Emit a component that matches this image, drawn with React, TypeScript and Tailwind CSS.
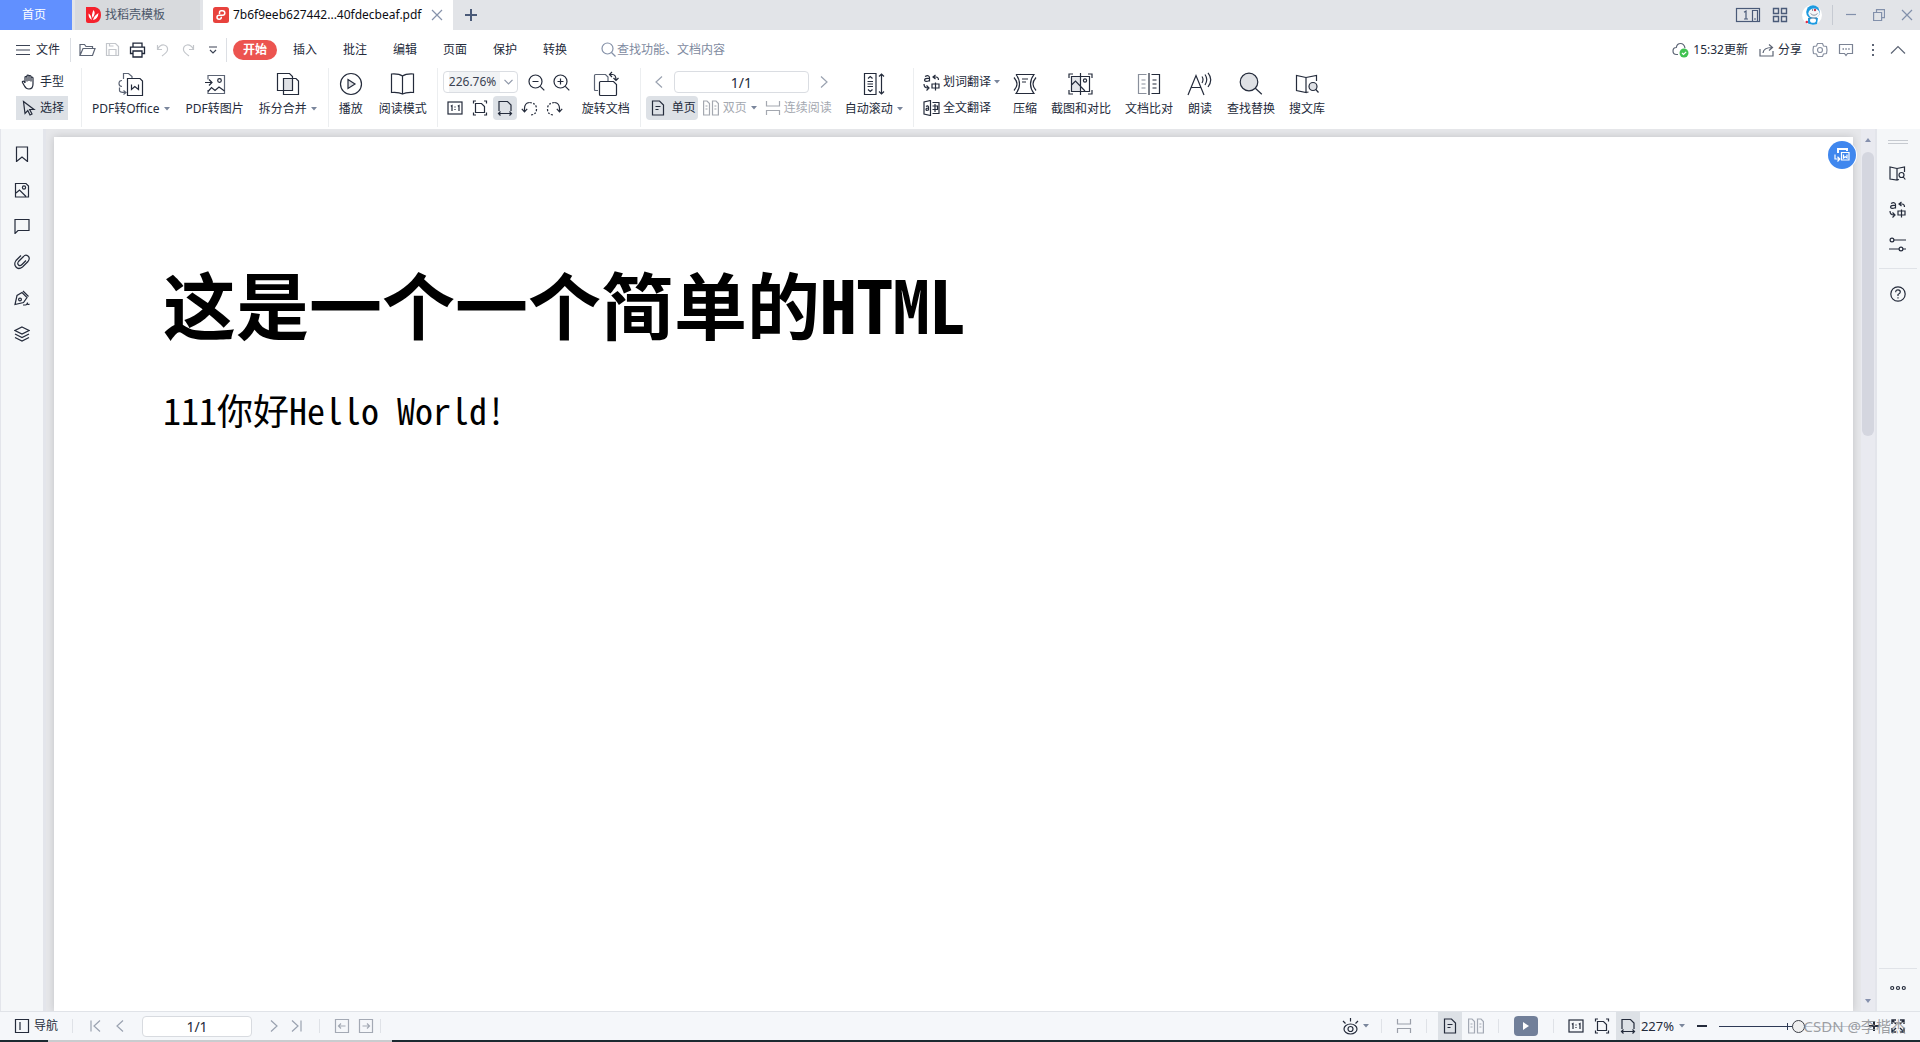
import type { ReactNode } from "react";

type IconProps = {
  w: number;
  h?: number;
  sw?: number;
  className?: string;
  children: ReactNode;
};

/** Line icon whose view box uses one unit per CSS pixel. */
function Icon({ w, h = w, sw = 1.2, className = "", children }: IconProps) {
  return (
    <svg
      width={w}
      height={h}
      viewBox={`0 0 ${w} ${h}`}
      fill="none"
      stroke="currentColor"
      strokeWidth={sw}
      className={`shrink-0 ${className}`}
      aria-hidden="true"
    >
      {children}
    </svg>
  );
}

const Caret = () => (
  <Icon w={6} h={4} className="text-[#7a869c]">
    <path d="M0 0h6L3 3.500z" fill="currentColor" stroke="none" />
  </Icon>
);

/* ---------- icons ---------- */

const ActualSize = () => (
  <Icon w={16}>
    <rect x="1" y="2" width="14" height="12" />
    <path d="M3.8 6.2L5 5.5V11M10.8 6.2L12 5.5V11M8 6.5v1M8 9v1" />
  </Icon>
);

const FitPage = () => (
  <Icon w={16}>
    <path d="M4 1H1.500v2.500M12 1h2.500v2.500M4 15H1.500v-2.500M12 15h2.500v-2.500" />
    <path d="M3.500 3.500H9.500L12.500 6.500V12.500H3.500z" />
  </Icon>
);

const FitWidth = () => (
  <Icon w={16}>
    <path d="M2 11V1.500H10.500L14 5V11M1.500 13.500h13M3.500 11.500l-2 2 2 2M12.500 11.500l2 2-2 2" />
  </Icon>
);

const SinglePage = () => (
  <Icon w={16}>
    <path d="M2.500 1H9.500L13.500 5V15H2.500zM5.500 6.500h5M5.500 9.500h3" />
  </Icon>
);

const DoublePage = () => (
  <Icon w={16}>
    <path d="M.6 1H4L6.500 3.500V15H.6zM9.500 1H13L15.400 3.500V15H9.500zM2.500 6h2M2.500 9h2M11.400 6h2M11.400 9h2" />
  </Icon>
);

const Continuous = () => (
  <Icon w={16}>
    <path d="M1.500 1v5h13V1M1.500 15v-4.500h13V15" />
  </Icon>
);

const ChevronLeft = () => (
  <Icon w={12} h={14}>
    <path d="M9 1.500L3 7l6 5.500" />
  </Icon>
);
const ChevronRight = () => (
  <Icon w={12} h={14}>
    <path d="M3 1.500L9 7l-6 5.500" />
  </Icon>
);

const TranslateWord = () => (
  <Icon w={17} h={17} sw={1.2}>
    <path d="M2 2.500Q6 .5 6.500 3.500V7.500M6.500 4.500Q1.500 4 1.500 6.200 2 8.500 6.500 6.500" />
    <path d="M12.500 1l-2.500 2 2.500 2M10 3h3Q15.500 3 15.500 6M1 10Q1 14 5 14M3.500 11.500l2.500 2.500-2.500 2.500" />
    <path d="M9 10h7v4H9zM12.500 8.500v8" />
  </Icon>
);

const BookSearchSmall = () => (
  <Icon w={17} h={15}>
    <path d="M8 2.500L1 1V13L8 14zM8 2.500L15.500 1V6M8 14l2-.5" />
    <circle cx="12.500" cy="9" r="2.500" />
    <path d="M14.300 11l2 2.500" />
  </Icon>
);

/* ---------- title bar ---------- */

function TitleBar() {
  return (
    <header className="flex h-[30px] shrink-0 items-stretch bg-[#e2e4e8]">
      <button className="w-[72px] bg-[#6190ff] pr-1 text-white">首页</button>
      <button className="ml-[3px] flex w-[125px] items-center gap-1 bg-[#d8dadd] pl-[11px] text-[#4b5669]">
        <svg width="15" height="16" viewBox="0 0 15 16" aria-hidden="true">
          <path d="M0 0H9Q15 1 15 8T8 16H2Q0 16 0 14z" fill="#f5222d" />
          <path d="M7.500 3Q9.500 5.500 8 8.500L6.700 11Q5 8 7.500 3zM2.500 6.500Q5.500 8 5.700 13 2.500 11 2.500 6.500zM12.500 6Q8 8.500 7 13 12 12 12.500 6z" fill="#fff" />
        </svg>
        找稻壳模板
      </button>
      <div className="ml-[3px] flex w-[250px] items-center bg-white pl-[10px] text-[#0c0e14]">
        <svg width="16" height="16" viewBox="0 0 16 16" aria-hidden="true">
          <rect width="16" height="16" rx="2.500" fill="#e8423d" />
          <path
            d="M6.500 7V5.500Q6.500 3.700 8.200 3.700H9.500Q11.800 3.700 11.800 6T9.500 8.300H6.200Q4 8.300 4 10.300T6.200 12.300Q8.300 12.300 8.300 10.300V9.800"
            fill="none"
            stroke="#fff"
            strokeWidth="1.500"
          />
        </svg>
        <span className="ml-1 flex-1 whitespace-nowrap">7b6f9eeb627442...40fdecbeaf.pdf</span>
        <button aria-label="关闭标签" className="mr-[10px] text-[#8793ab]">
          <Icon w={12}>
            <path d="M1 1l10 10M11 1L1 11" />
          </Icon>
        </button>
      </div>
      <button aria-label="新建标签" className="ml-3 text-[#4a5a78]">
        <Icon w={12} sw={2}>
          <path d="M6 0v12M0 6h12" />
        </Icon>
      </button>
      <div className="ml-auto flex items-center text-[#4a5a78]">
        <button aria-label="窗口布局" className="mr-[11px]">
          <Icon w={26} h={16}>
            <rect x="1.500" y="1.500" width="23" height="13" />
            <path d="M9 5.200L11 4v8M9 12h4M17.500 14.500V3.500h5V14.500M19 12h2" />
          </Icon>
        </button>
        <button aria-label="应用" className="mr-[14px]">
          <Icon w={16} sw={1.4}>
            <path d="M1.500 1.500h5v5h-5zM9.500 1.500h5v5h-5zM1.500 9.500h5v5h-5zM9.500 9.500h5v5h-5z" />
          </Icon>
        </button>
        <button aria-label="用户" className="mr-[10px]">
          <svg width="20" height="20" viewBox="0 0 20 20" aria-hidden="true">
            <circle cx="10" cy="10" r="10" fill="#fff" />
            <circle cx="11" cy="7" r="6.800" fill="#1d9ae0" />
            <ellipse cx="12" cy="8.200" rx="5.600" ry="4.600" fill="#f4f6f8" />
            <path d="M6 13h10l-1 6Q10 20.500 6 18.500z" fill="#1d9ae0" />
            <ellipse cx="11" cy="15.500" rx="3" ry="2.300" fill="#fff" />
            <circle cx="13" cy="5" r="1.200" fill="#c8384a" />
            <path d="M8.500 8.500Q12 12 15.500 8.500M10.500 4v2M6.500 13H15" stroke="#5b6b80" strokeWidth=".7" fill="none" />
            <circle cx="4.800" cy="17" r="1.300" fill="#e0304a" />
          </svg>
        </button>
        <span className="h-5 w-px bg-[#c6cad2]" />
        <div className="flex items-center gap-4 pr-[7px] pl-3 text-[#8290ab]">
          <button aria-label="最小化">
            <Icon w={12}>
              <path d="M1 5.500h10" />
            </Icon>
          </button>
          <button aria-label="还原">
            <Icon w={12}>
              <path d="M.6 3.500h8v8h-8zM3.500 3.500V.6h8v8h-3" />
            </Icon>
          </button>
          <button aria-label="关闭">
            <Icon w={12}>
              <path d="M1 1l10 10M11 1L1 11" />
            </Icon>
          </button>
        </div>
      </div>
    </header>
  );
}

/* ---------- menu row ---------- */

const MENUS = ["插入", "批注", "编辑", "页面", "保护", "转换"];

function MenuBar() {
  return (
    <nav className="flex h-[38px] shrink-0 items-center bg-white pt-px pl-4">
      <button className="flex items-center gap-[5px]">
        <Icon w={15} h={12} className="text-[#3c4354]">
          <path d="M0 1.500h14M0 6h14M0 10.500h14" />
        </Icon>
        文件
      </button>
      <span className="ml-[10px] h-6 w-px bg-[#dcdfe4]" />
      <div className="ml-2 flex items-center gap-[9px] text-[#c3c6cb]">
        <button aria-label="打开" className="text-[#5d6575]">
          <Icon w={17} h={14}>
            <path d="M1 12.500V1.500h4.500L7 3.500h6.500V5.500M1 12.500L4 5.500h12L13.500 12.500z" />
          </Icon>
        </button>
        <button aria-label="保存">
          <Icon w={15}>
            <path d="M1.500 1.500H10.500L13.500 4.500V13.500H1.500zM4 13V7.500h7V13M4.500 1.500v2.500h4" />
          </Icon>
        </button>
        <button aria-label="打印" className="text-[#1f2738]">
          <Icon w={17} h={16} sw={1.3}>
            <path d="M4 5V1.200h9V5M4 11.500H1.500V5.200h14V11.500H13M4 9h9v6H4z" />
          </Icon>
        </button>
        <button aria-label="撤销">
          <Icon w={16} h={14}>
            <path d="M2.500 2v4.500H7M2.500 6.500Q5 1.500 9 2 13 3 12.500 7 12 9.500 7 13" />
          </Icon>
        </button>
        <button aria-label="恢复">
          <Icon w={16} h={14}>
            <path d="M13.500 2v4.500H9M13.500 6.500Q11 1.500 7 2 3 3 3.500 7 4 9.500 9 13" />
          </Icon>
        </button>
        <button aria-label="自定义快速访问" className="ml-[3px] text-[#3c4354]">
          <Icon w={10}>
            <path d="M1 2h8M2 5l3 3 3-3" />
          </Icon>
        </button>
      </div>
      <span className="ml-2 h-6 w-px bg-[#dcdfe4]" />
      <button className="ml-[6px] h-5 w-11 rounded-full bg-[#ec5450] font-bold text-white">开始</button>
      <div className="ml-4 flex gap-[26px]">
        {MENUS.map((m) => (
          <button key={m}>{m}</button>
        ))}
      </div>
      <label className="ml-[34px] flex items-center gap-px text-[#8591a8]">
        <Icon w={15}>
          <circle cx="6.500" cy="6.500" r="5.500" />
          <path d="M10.500 10.500l4 4" />
        </Icon>
        <input
          type="text"
          aria-label="搜索"
          placeholder="查找功能、文档内容"
          className="w-[160px] bg-transparent outline-none placeholder:text-[#7e8aa0]"
        />
      </label>
      <div className="ml-auto flex items-center pr-[14px] text-[#5d6575]">
        <button className="flex items-center gap-1">
          <svg width="17" height="16" viewBox="0 0 17 16" fill="none" aria-hidden="true">
            <path d="M6 12.500H4.500Q1 12.500 1 9T4.300 5.500Q5 1.500 8.500 1.500T13 6" stroke="#5d6575" strokeWidth="1.200" />
            <circle cx="12" cy="11" r="4.500" fill="#41c251" />
            <path d="M10 11l1.500 1.500L14.200 9.800" stroke="#fff" strokeWidth="1.200" />
          </svg>
          <span className="text-[#242b3b]">15:32更新</span>
        </button>
        <button className="ml-[11px] flex items-center gap-1">
          <Icon w={15} h={14}>
            <path d="M1 6v7h13V8M4 10Q4.500 4.500 13 4.500M10 1.500l3.500 3-3.500 3" />
          </Icon>
          <span className="text-[#242b3b]">分享</span>
        </button>
        <button aria-label="设置" className="ml-[10px] text-[#8a92a2]">
          <Icon w={16}>
            <path d="M5.500 1.500h5L11.500 4l3 .5L15 8l-.5 3.500-3 .5-1 2.500h-5L4.500 12l-3-.5L1 8l.5-3.500 3-.5z" />
            <circle cx="8" cy="8" r="2.500" />
          </Icon>
        </button>
        <button aria-label="反馈" className="ml-[10px] text-[#7b8394]">
          <Icon w={16} h={14}>
            <path d="M1.500 1.500h13v9H9.500L8 12.500 6.500 10.500h-5z" />
            <path d="M4.500 6h1.500M7.300 6h1.500M10.200 6h1.500" strokeWidth="1.600" />
          </Icon>
        </button>
        <button aria-label="更多" className="ml-[14px]">
          <Icon w={10} h={14}>
            <path d="M4 1h2v2H4zM4 6h2v2H4zM4 11h2v2H4z" fill="currentColor" stroke="none" />
          </Icon>
        </button>
        <button aria-label="收起功能区" className="ml-3">
          <Icon w={16} h={10}>
            <path d="M1 8.500L8 1.500l7 7" />
          </Icon>
        </button>
      </div>
    </nav>
  );
}

/* ---------- ribbon ---------- */

function Tool({ label, caret, children }: { label: string; caret?: boolean; children: ReactNode }) {
  return (
    <button className="flex shrink-0 flex-col items-center gap-1 pt-[3px]">
      <span className="flex h-[26px] items-center">{children}</span>
      <span className="flex items-center gap-1 leading-4 whitespace-nowrap">
        {label}
        {caret && <Caret />}
      </span>
    </button>
  );
}

const Rule = () => <span className="h-[59px] w-px shrink-0 bg-[#eceef0]" />;

const iconBtn = "flex h-6 w-6 items-center justify-center";
const iconBtnOn = "flex h-6 w-6 items-center justify-center rounded-sm bg-[#dde1e6]";

function Ribbon() {
  return (
    <section className="flex h-[61px] shrink-0 items-start bg-white pl-4">
      <div className="mr-[13px] flex flex-col gap-[2px] pt-[2px]">
        <button className="flex h-6 w-[52px] items-center gap-1 pl-[5px]">
          <Icon w={15} h={16}>
            <path d="M4 9V3.500Q4 2.500 5 2.500T6 3.500V7.500M6 3V2Q6 1 7 1T8 2V7M8 2.500Q8 1.500 9 1.500T10 2.500V7.500M10 4Q10 3 11 3T12 4V10Q12 15 8 15 5 15 3.500 12L1.500 8.500Q1 7.500 2 7.200T4 9" />
          </Icon>
          手型
        </button>
        <button className="flex h-6 w-[52px] items-center gap-1 bg-[#dde1e6] pl-[5px]">
          <Icon w={15} h={16}>
            <path d="M2.500 1.500L13 9.500H8.700L11 14 9 15 6.800 10.500 4 13.500z" />
          </Icon>
          选择
        </button>
      </div>
      <Rule />
      <div className="mr-[11px] ml-[10px] flex">
        <Tool label="PDF转Office" caret>
          <Icon w={26} h={26}>
            <path d="M5.500 8V2.500H10.500L14 5.500V7M4 9.500Q1 9.500 1 12.500T4 15.500M1.500 16.500V19.500Q1.500 21.500 7 21.500M5.500 19.500l2.500 2-2.500 2" stroke="#5d6575" />
            <path d="M9.500 7.500H22L24.500 10V24.500H9.500z" />
            <path d="M13.500 13.500V18.500L16.800 15.500 20.500 18.500V13.500" />
          </Icon>
        </Tool>
        <span className="w-4" />
        <Tool label="PDF转图片">
          <Icon w={22} h={22}>
            <path d="M4 6.500V2.500H20.500V20.500H4V17" stroke="#5d6575" />
            <path d="M1 9.500H7.500M5 6.500l3 3-3 3" />
            <circle cx="15.500" cy="7.500" r="1.800" />
            <path d="M4 18.500L7.500 14.500 11 17.500 15 14 20.500 18" />
          </Icon>
        </Tool>
        <span className="w-[15px]" />
        <Tool label="拆分合并" caret>
          <Icon w={24} h={24}>
            <path d="M7.500 6.500H16.500V18.500H7.500z" fill="#dfe1e5" stroke="none" />
            <path d="M7 18.500H1.500V1.500H13.500L16.500 4.500V18.500H7" />
            <path d="M7.500 6.500H20L22.500 9V22.500H7.500z" />
          </Icon>
        </Tool>
      </div>
      <Rule />
      <div className="mx-[10px] flex gap-4">
        <Tool label="播放">
          <Icon w={24}>
            <circle cx="12" cy="12" r="10.500" />
            <path d="M9 7.500L16 12 9 16.500z" fill="#dfe1e5" />
          </Icon>
        </Tool>
        <Tool label="阅读模式">
          <Icon w={25} h={24}>
            <path d="M12.500 4Q9 1.500 1.500 2V20.500Q9 20 12.500 22 16 20 23.500 20.500V2Q16 1.500 12.500 4zV22" />
          </Icon>
        </Tool>
      </div>
      <Rule />
      <div className="ml-[5px] flex flex-col gap-[3px] pt-[3px]">
        <div className="flex items-center">
          <label className="relative flex h-[22px] w-[75px] items-center rounded-sm border border-[#dadde2]">
            <select
              aria-label="缩放比例"
              className="ml-[5px] h-full w-[51px] appearance-none overflow-visible bg-[#f1f3f5] text-[#3a4252] outline-none"
            >
              <option>226.76%</option>
            </select>
            <span className="pointer-events-none absolute right-1 text-[#8e97a8]">
              <Icon w={9} h={6}>
                <path d="M.5 .8l4 4 4-4" />
              </Icon>
            </span>
          </label>
          <button aria-label="缩小" className="ml-[10px]">
            <Icon w={17}>
              <circle cx="7.500" cy="7.500" r="6.500" />
              <path d="M4.500 7.500h6M12.300 12.300l4 4" />
            </Icon>
          </button>
          <button aria-label="放大" className="ml-2">
            <Icon w={17}>
              <circle cx="7.500" cy="7.500" r="6.500" />
              <path d="M4.500 7.500h6M7.500 4.500v6M12.300 12.300l4 4" />
            </Icon>
          </button>
        </div>
        <div className="flex gap-[1px]">
          <button aria-label="实际大小" className={iconBtn}>
            <ActualSize />
          </button>
          <button aria-label="适合页面" className={iconBtn}>
            <FitPage />
          </button>
          <button aria-label="适合宽度" className={iconBtnOn}>
            <FitWidth />
          </button>
          <button aria-label="向左旋转" className={iconBtn}>
            <Icon w={17} h={15}>
              <path d="M3.500 10.500V7.500Q3.500 2 8.500 1.500M.8 7.800l2.700 3 2.700-3" />
              <path d="M8.500 1.500Q15.500 2 15.500 8T9 14" strokeDasharray="2 1.500" />
            </Icon>
          </button>
          <button aria-label="向右旋转" className={iconBtn}>
            <Icon w={17} h={15}>
              <path d="M13.500 10.500V7.500Q13.500 2 8.500 1.500M16.200 7.800l-2.700 3-2.700-3" />
              <path d="M8.500 1.500Q1.500 2 1.500 8T8 14" strokeDasharray="2 1.500" />
            </Icon>
          </button>
        </div>
      </div>
      <div className="mr-[10px] ml-3">
        <Tool label="旋转文档">
          <Icon w={26} h={26}>
            <path d="M5 19.500H2.500Q1.500 19.500 1.500 18.500V4.500Q1.500 3.500 2.500 3.500H12.500L15 6V10" stroke="#5d6575" />
            <path d="M6.500 11.500Q6.500 10.500 7.500 10.500H20.500L23.500 13.500V23.500Q23.500 24.500 22.500 24.500H7.500Q6.500 24.500 6.500 23.500z" />
            <path d="M19 1l-2.500 2.500 2.500 2.500M16.500 3.500h3Q23 3.500 23 9M20.500 7l2.500 2.500 2.500-2.500" />
          </Icon>
        </Tool>
      </div>
      <Rule />
      <div className="ml-[5px] flex flex-col gap-[3px] pt-[3px]">
        <div className="flex h-[22px] items-center justify-between pr-[2px] pl-[7px] text-[#9aa2b0]">
          <button aria-label="上一页">
            <ChevronLeft />
          </button>
          <input
            aria-label="页码"
            defaultValue="1/1"
            className="h-[22px] w-[135px] rounded-sm border border-[#dadde2] text-center text-[14px] text-[#242b3b] outline-none"
          />
          <button aria-label="下一页">
            <ChevronRight />
          </button>
        </div>
        <div className="flex items-center text-[#a4a8b0]">
          <button className="flex h-6 w-[52px] items-center gap-[6px] rounded-sm bg-[#dde1e6] pl-1 text-[#242b3b]">
            <SinglePage />
            单页
          </button>
          <button className="ml-[5px] flex items-center gap-1">
            <DoublePage />
            双页
            <Caret />
          </button>
          <button className="ml-2 flex items-center gap-[3px]">
            <Continuous />
            连续阅读
          </button>
        </div>
      </div>
      <div className="mr-[10px] ml-[13px]">
        <Tool label="自动滚动" caret>
          <Icon w={22} h={24}>
            <path d="M1.500 1.500H13V22.500H1.500zM4.500 9.500h5.500M4.500 12h5.500M4.500 14.500h5.500M5 6.500l2.250-2 2.250 2M5 17.500l2.250 2 2.250-2" />
            <path d="M18.500 2v20M16 4.500l2.500-2.500 2.500 2.500M16 19.500l2.500 2.500 2.500-2.500" />
          </Icon>
        </Tool>
      </div>
      <Rule />
      <div className="mr-[13px] ml-[9px] flex flex-col gap-[2px] pt-[2px]">
        <button className="flex h-6 items-center gap-[3px]">
          <TranslateWord />
          划词翻译
          <Caret />
        </button>
        <button className="flex h-6 items-center gap-[3px]">
          <Icon w={17} h={16}>
            <path d="M7.500 .5L1 2v12l6.500 1.500zM9.500 2.500h6.500v11h-6.500M9.500 6h5v3.500h-5M12 4v8M3 6.500Q5 5 5.500 7v3.500M5.500 8Q3 8 3 9.500T5.500 10" />
          </Icon>
          全文翻译
        </button>
      </div>
      <div className="flex gap-[14px]">
        <Tool label="压缩">
          <Icon w={24} h={24}>
            <path d="M3 2.500H21Q17.500 7 17.500 12T21 21.500H3Q6.500 17 6.500 12T3 2.500M9 7h6M9 10h4" />
            <path d="M1 5.500Q4 9 4 12T1 18.500M23 5.500Q20 9 20 12T23 18.500" />
          </Icon>
        </Tool>
        <Tool label="截图和对比">
          <Icon w={25} h={24}>
            <path d="M3.500 4.500H12.500V19.500H3.500z" fill="#e4e6ea" stroke="none" />
            <path d="M1 6V2H5M20 2h4V6M1 18v4H5M20 22h4V18" />
            <path d="M3.500 4.500H21.500V19.500H3.500zM12.500 1v22M3.500 13L7.500 9 17 19" />
            <circle cx="17" cy="8.500" r="1.600" />
          </Icon>
        </Tool>
        <Tool label="文档比对">
          <Icon w={24} h={24}>
            <path d="M9.500 2.500H1.500V21.500H9.500M4.500 8h4M4.500 12h4M4.500 16h4" stroke="#8a909c" />
            <path d="M12 1v22M14.500 2.500H22.500V21.500H14.500M15.500 8h4M15.500 12h4M15.500 16h4" />
          </Icon>
        </Tool>
        <Tool label="朗读">
          <Icon w={26} h={24}>
            <path d="M1 23L9 3.500 17 23M4 15.500h10" />
            <path d="M15 4.500Q17 7.500 15 11M18 2.500Q21.500 7.500 18 13M21 .8Q26.500 7.500 21 15" />
          </Icon>
        </Tool>
        <Tool label="查找替换">
          <Icon w={24}>
            <circle cx="10" cy="10" r="8.800" fill="#dfe1e5" />
            <path d="M16.300 16.300l6.500 6" />
          </Icon>
        </Tool>
        <Tool label="搜文库">
          <Icon w={24} h={22}>
            <path d="M11 4.500L1.500 2.500V17.500L11 19.500zM11 4.500L21.500 2.500V8M11 19.500l2.500-.5" />
            <circle cx="18" cy="13.500" r="4" fill="#dfe1e5" />
            <path d="M20.800 16.500l2.700 3" />
          </Icon>
        </Tool>
      </div>
    </section>
  );
}

/* ---------- workspace ---------- */

function LeftRail() {
  return (
    <aside className="flex w-[46px] shrink-0 flex-col items-center gap-5 border-r-[3px] border-l border-[#e3e5eb] bg-[#f5f7f9] pt-[17px]">
      <button aria-label="书签">
        <Icon w={16}>
          <path d="M2.500 1H13.500V15.500L8 11 2.500 15.500z" />
        </Icon>
      </button>
      <button aria-label="缩略图">
        <Icon w={16}>
          <path d="M1.500 1.500H12L14.500 4V15H1.500zM2 11L5.500 8 12 14.500" />
          <circle cx="10" cy="5.500" r="1.600" />
        </Icon>
      </button>
      <button aria-label="批注">
        <Icon w={16}>
          <path d="M1 1.500H15V12.500H4L1 15.500z" />
        </Icon>
      </button>
      <button aria-label="附件">
        <Icon w={16}>
          <path d="M7 1.500L2 6.500Q-.5 10 2 13T8.500 13L14 7.500Q16.500 4 14 2T9.500 2.500L4.500 7.500Q3 9.500 4.500 11T8 10.500L12 6.500" />
        </Icon>
      </button>
      <button aria-label="签名">
        <Icon w={16}>
          <path d="M9 1l5.500 5.500M8 2.500L3 5.500 1 14.500 9.500 12.500 13 7.500zM9 15h2.500Q13 15 13.500 12.500 13 15.500 15.500 14" />
          <circle cx="6" cy="9.500" r="1.400" />
        </Icon>
      </button>
      <button aria-label="图层">
        <Icon w={16}>
          <path d="M8 1L15 4.500 8 8 1 4.500zM1 8l7 3.500L15 8M1 11.500L8 15l7-3.500" />
        </Icon>
      </button>
    </aside>
  );
}

function RightRail() {
  return (
    <aside className="flex w-[45px] shrink-0 flex-col items-center border-l-2 border-[#e3e5eb] bg-[#f5f7f9] pt-[11px] pr-[2px]">
      <span className="h-1 w-5 border-y border-[#c6cad0]" />
      <button aria-label="搜文库" className="mt-[22px]">
        <BookSearchSmall />
      </button>
      <button aria-label="划词翻译" className="mt-5">
        <TranslateWord />
      </button>
      <button aria-label="设置" className="mt-[19px]">
        <Icon w={17} h={15}>
          <circle cx="3" cy="3" r="1.900" />
          <circle cx="12" cy="12" r="1.900" />
          <path d="M5 3h12M0 12h10M14 12h3" />
        </Icon>
      </button>
      <span className="mt-4 h-px w-[38px] bg-[#e0e3e8]" />
      <button aria-label="帮助" className="mt-[17px]">
        <Icon w={16}>
          <circle cx="8" cy="8" r="7.200" />
          <path d="M5.700 6.200Q5.700 3.800 8 3.800T10.300 6Q10.300 7.200 8 8.500V10M8 11.200v1.300" />
        </Icon>
      </button>
      <div className="mt-auto flex h-[43px] w-[38px] justify-center border-t border-[#e0e3e8] pb-1">
        <button aria-label="更多工具">
          <Icon w={16} h={16}>
            <circle cx="2.200" cy="8" r="1.500" />
            <circle cx="8" cy="8" r="1.500" />
            <circle cx="13.800" cy="8" r="1.500" />
          </Icon>
        </button>
      </div>
    </aside>
  );
}

function Workspace() {
  return (
    <main className="flex min-h-0 flex-1">
      <LeftRail />
      <div className="relative flex min-w-0 flex-1 overflow-hidden bg-[#e6e7ea] px-2 pt-2">
        <article className="flex-1 bg-white pt-[129px] pl-[109px] text-black shadow-[0_0_8px_rgba(0,0,0,0.16)] font-['Noto_Sans_Mono_CJK_SC','Noto_Sans_CJK_SC',monospace]">
          <h1 className="text-[73px] leading-[72px] font-bold">这是一个一个简单的HTML</h1>
          <p className="mt-[49px] text-[36px] leading-[44px]">111你好Hello World!</p>
        </article>
        <button
          aria-label="转换为Word"
          className="absolute top-3 right-[5px] flex h-7 w-7 items-center justify-center rounded-full bg-[#4087ee] text-white shadow-[0_0_0_1px_#fff]"
        >
          <Icon w={16}>
            <path d="M4 6V2H13V4" strokeWidth="2" />
            <path d="M7.500 5.500H15V13H7.500zM9.500 7.500v3.500L11.200 9.800 13 11V7.500" />
            <path d="M1 7.500V12H5M3.500 9.800L5.800 12 3.500 14.500" />
          </Icon>
        </button>
      </div>
      <div className="flex w-[14px] shrink-0 flex-col items-center bg-[#e9eaf0] pt-[9px] pb-2 text-[#8590ad]">
        <Icon w={6} h={4}>
          <path d="M0 4L3 0l3 4z" fill="currentColor" stroke="none" />
        </Icon>
        <span className="mt-[10px] h-[284px] w-3 rounded-full bg-[#d4d6df]" />
        <Icon w={6} h={4} className="mt-auto">
          <path d="M0 0L3 4l3-4z" fill="currentColor" stroke="none" />
        </Icon>
      </div>
      <RightRail />
    </main>
  );
}

/* ---------- status bar ---------- */

const Sep = () => <span className="h-[14px] w-px shrink-0 bg-[#dfe2e7]" />;

function StatusBar() {
  return (
    <footer className="shrink-0">
      <div className="flex h-[29px] items-center border-t border-[#e0e3e8] bg-[#f5f7fa] pl-[14px]">
        <button className="flex items-center gap-1">
          <Icon w={16}>
            <path d="M1.500 1.500h13v13h-13zM6 4v8" />
          </Icon>
          导航
        </button>
        <span className="ml-[14px]" />
        <Sep />
        <div className="ml-4 flex items-center text-[#9aa2b0]">
          <button aria-label="第一页">
            <Icon w={13} h={14}>
              <path d="M2 1.500v11M11 1.500L5 7l6 5.500" />
            </Icon>
          </button>
          <button aria-label="上一页" className="ml-3">
            <ChevronLeft />
          </button>
          <input
            aria-label="当前页"
            defaultValue="1/1"
            className="ml-4 h-[21px] w-[110px] rounded-sm border border-[#d8dbe0] bg-white text-center text-[14px] text-[#242b3b] outline-none"
          />
          <button aria-label="下一页" className="ml-4">
            <ChevronRight />
          </button>
          <button aria-label="最后一页" className="ml-[10px]">
            <Icon w={13} h={14}>
              <path d="M11 1.500v11M2 1.500L8 7l-6 5.500" />
            </Icon>
          </button>
        </div>
        <span className="ml-4" />
        <Sep />
        <div className="mr-[6px] ml-[14px] flex gap-2 text-[#a3a9b4]">
          <button aria-label="后退视图">
            <Icon w={16}>
              <path d="M1.500 1.500h13v13h-13zM4.500 8h7M7 5.500L4.500 8 7 10.500" />
            </Icon>
          </button>
          <button aria-label="前进视图">
            <Icon w={16}>
              <path d="M1.500 1.500h13v13h-13zM4.500 8h7M9 5.500L11.500 8 9 10.500" />
            </Icon>
          </button>
        </div>
        <Sep />
        <div className="relative ml-auto flex items-center pr-[15px]">
          <button aria-label="护眼模式" className="flex items-center gap-1">
            <Icon w={17} h={17}>
              <circle cx="8.500" cy="11" r="2.500" />
              <ellipse cx="8.500" cy="11" rx="6.500" ry="5" />
              <path d="M8.500 0v3.500M1 3l2.500 2.500M16 3l-2.500 2.500" />
            </Icon>
            <Caret />
          </button>
          <span className="ml-3" />
          <Sep />
          <button aria-label="连续阅读" className="mx-[14px] text-[#9a9fa9]">
            <Continuous />
          </button>
          <Sep />
          <button aria-label="单页" className="ml-[11px] flex h-7 w-6 items-center justify-center bg-[#dde1e6]">
            <SinglePage />
          </button>
          <button aria-label="双页" className="mr-[14px] ml-[6px] text-[#a3a9b4]">
            <DoublePage />
          </button>
          <Sep />
          <button aria-label="播放" className="mx-[15px] flex h-5 w-6 items-center justify-center rounded-sm bg-[#717f99] text-white">
            <Icon w={8} h={10}>
              <path d="M1 1l6 4-6 4z" fill="currentColor" stroke="none" />
            </Icon>
          </button>
          <Sep />
          <button aria-label="实际大小" className="ml-[14px]">
            <ActualSize />
          </button>
          <button aria-label="适合页面" className="ml-[10px]">
            <FitPage />
          </button>
          <button aria-label="适合宽度" className="ml-[6px] flex h-7 w-6 items-center justify-center bg-[#dde1e6]">
            <FitWidth />
          </button>
          <button className="ml-px flex items-center gap-[5px] text-[13px]">
            227% <Caret />
          </button>
          <button aria-label="缩小" className="ml-3">
            <Icon w={10} h={10} sw={2}>
              <path d="M0 5h10" />
            </Icon>
          </button>
          <div className="relative ml-3 flex h-5 w-[150px] items-center">
            <span className="absolute left-[68px] h-[7px] w-px bg-[#2e3a55]" />
            <input
              type="range"
              aria-label="缩放"
              min={0}
              max={100}
              defaultValue={53}
              className="h-[13px] w-full appearance-none bg-[linear-gradient(90deg,#2e3a55_0_53%,#c3c8d2_53%_100%)] bg-[length:100%_1px] bg-center bg-no-repeat [&::-webkit-slider-thumb]:h-[13px] [&::-webkit-slider-thumb]:w-[13px] [&::-webkit-slider-thumb]:appearance-none [&::-webkit-slider-thumb]:rounded-full [&::-webkit-slider-thumb]:border [&::-webkit-slider-thumb]:border-[#3c3f47] [&::-webkit-slider-thumb]:bg-[#efefef]"
            />
          </div>
          <button aria-label="放大">
            <Icon w={10} sw={2}>
              <path d="M0 5h10M5 0v10" />
            </Icon>
          </button>
          <button aria-label="全屏" className="ml-3">
            <Icon w={14} sw={1.4}>
              <path d="M1 5V1h4M9 1h4v4M13 9v4H9M5 13H1V9M1 1l4 4M13 1L9 5M13 13L9 9M1 13l4-4" />
            </Icon>
          </button>
          <span className="pointer-events-none absolute right-[14px] text-[15px] whitespace-nowrap text-[#8c8e92]/85">
            CSDN @李楷杰
          </span>
        </div>
      </div>
      <div className="flex h-[2px] bg-[#1b2a31]">
        <span className="ml-12 w-[344px] bg-[#c9cccf]" />
      </div>
    </footer>
  );
}

export default function App() {
  return (
    <div className="flex h-screen flex-col overflow-hidden bg-white text-[12px] leading-4 text-[#242b3b] font-['Noto_Sans','Noto_Sans_CJK_SC',sans-serif]">
      <TitleBar />
      <MenuBar />
      <Ribbon />
      <Workspace />
      <StatusBar />
    </div>
  );
}
